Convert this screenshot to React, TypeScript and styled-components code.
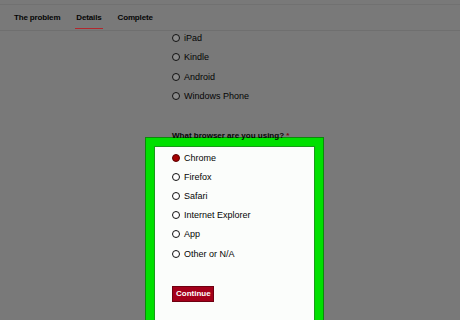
import React from "react";
import styled, { createGlobalStyle } from "styled-components";

const Global = createGlobalStyle`
  html, body { margin: 0; padding: 0; background: #797979; }
  body { font-family: "Liberation Sans", Arial, sans-serif; color: #050505; overflow: hidden; }
`;

const Page = styled.div`
  width: 460px;
  height: 320px;
  background: #797979;
  overflow: hidden;
`;

const TopStrip = styled.div`
  height: 4px;
  border-bottom: 1px solid #717171;
`;

const TabBar = styled.nav`
  height: 25px;
  display: flex;
  align-items: flex-start;
  gap: 14px;
  padding-left: 13px;
  border-bottom: 1px solid #6f6f6f;
`;

const Tab = styled.div<{ $active?: boolean }>`
  font-size: 8px;
  font-weight: bold;
  line-height: 10px;
  letter-spacing: -0.15px;
  padding: 8px 1px 0;
  height: 15px;
  box-sizing: content-box;
  border-bottom: ${(p) => (p.$active ? "1.5px solid #b3272d" : "1.5px solid transparent")};
`;

const Main = styled.main`
  padding-left: 146px;
`;

const DeviceList = styled.div`
  margin-top: -3px;
  padding-left: 26px;
  display: flex;
  flex-direction: column;
`;

const Row = styled.label<{ $h: number }>`
  height: ${(p) => p.$h}px;
  display: flex;
  align-items: center;
  gap: 4px;
  font-size: 9px;
  line-height: 10px;
`;

const Radio = styled.span<{ $fill: string; $checked?: boolean }>`
  width: 8px;
  height: 8px;
  box-sizing: border-box;
  border-radius: 50%;
  border: 1.5px solid ${(p) => (p.$checked ? "#5a0000" : "#111")};
  background: ${(p) => p.$fill};
  flex: none;
`;

const Question = styled.div`
  position: relative;
  z-index: 1;
  margin-top: 25px;
  padding-left: 26px;
  font-size: 8px;
  font-weight: bold;
  line-height: 10px;
`;

const Req = styled.span`
  color: #7a0d12;
`;

const Frame = styled.section`
  margin-top: -3px;
  width: 177px;
  height: 200px;
  box-sizing: border-box;
  border: 8px solid #00e000;
  box-shadow: 0 0 0 1px #0a8a0a, inset 0 0 0 1px #1a9a1a;
  background: #fbfdfb;
  padding: 2px 0 0 18px;
  display: flex;
  flex-direction: column;
`;

const BrowserList = styled.div`
  display: flex;
  flex-direction: column;
`;

const Button = styled.button`
  margin-top: 23px;
  align-self: flex-start;
  height: 16px;
  padding: 0 3px;
  box-sizing: border-box;
  background: #a3001a;
  border: 1px solid #6e0010;
  color: #fff;
  font-family: "Liberation Sans", Arial, sans-serif;
  font-size: 8px;
  font-weight: bold;
  line-height: 14px;
  width: 42px;
  text-align: center;
`;

const devices = ["iPad", "Kindle", "Android", "Windows Phone"];
const browsers = ["Chrome", "Firefox", "Safari", "Internet Explorer", "App", "Other or N/A"];

export default function App() {
  return (
    <Page>
      <Global />
      <TopStrip />
      <TabBar>
        <Tab>The problem</Tab>
        <Tab $active>Details</Tab>
        <Tab>Complete</Tab>
      </TabBar>
      <Main>
        <DeviceList>
          {devices.map((d) => (
            <Row key={d} $h={19.5}>
              <Radio $fill="#8a8a8a" />
              {d}
            </Row>
          ))}
        </DeviceList>
        <Question>
          What browser are you using? <Req>*</Req>
        </Question>
        <Frame>
          <BrowserList>
            {browsers.map((b, i) => (
              <Row key={b} $h={19.2}>
                <Radio $fill={i === 0 ? "#a50000" : "#ffffff"} $checked={i === 0} />
                {b}
              </Row>
            ))}
          </BrowserList>
          <Button>Continue</Button>
        </Frame>
      </Main>
    </Page>
  );
}
